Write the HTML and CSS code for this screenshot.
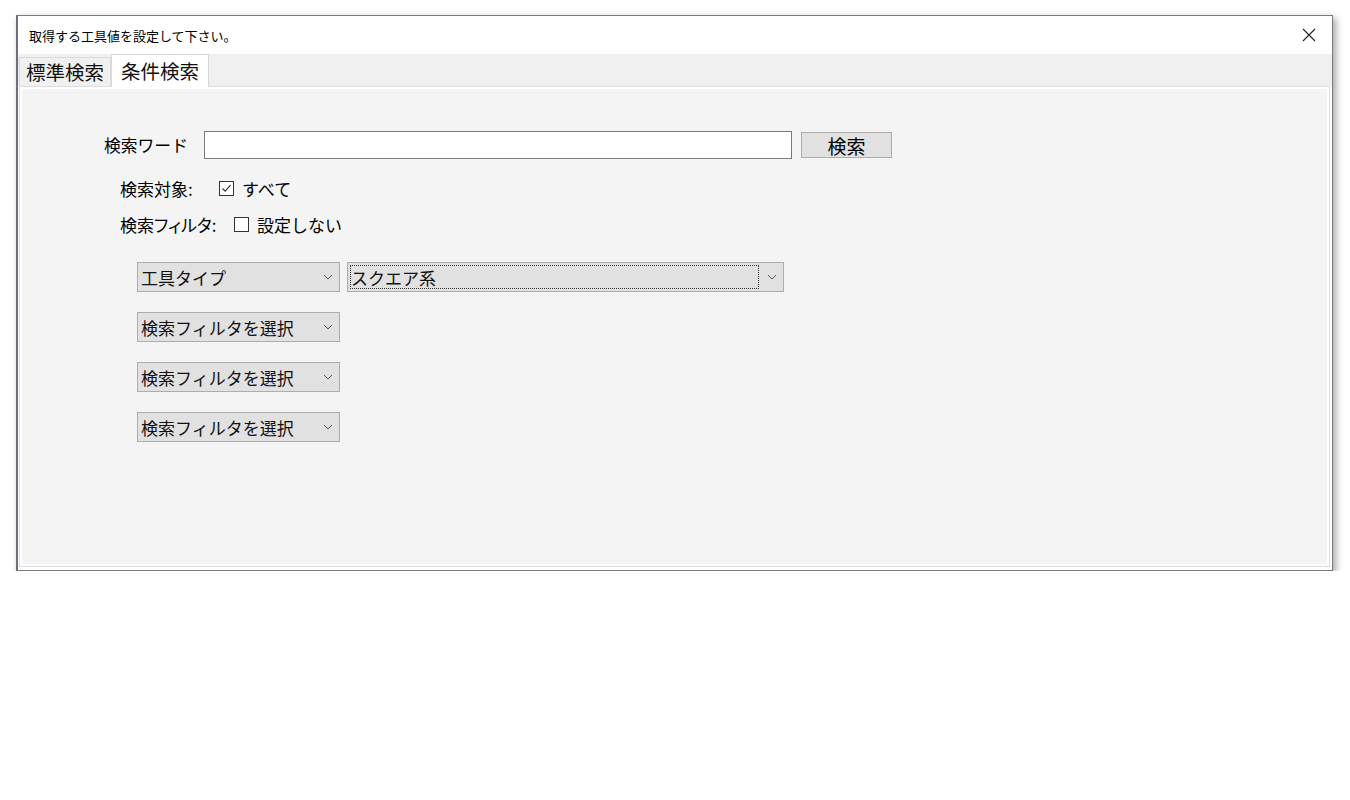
FILE: index.html
```html
<!DOCTYPE html>
<html lang="ja">
<head>
<meta charset="utf-8">
<title>取得する工具値を設定して下さい。</title>
<link rel="stylesheet" href="styles.css">
</head>
<body>
<div class="window">
  <div class="titlebar">
    <span class="title">取得する工具値を設定して下さい。</span>
    <span class="close">
      <svg width="14" height="14" viewBox="0 0 14 14"><path d="M1 1L13 13M13 1L1 13" stroke="#222" stroke-width="1.1" fill="none"/></svg>
    </span>
  </div>
  <div class="tabstrip">
    <div class="tab">標準検索</div>
    <div class="tab active">条件検索</div>
  </div>
  <div class="panel">
    <div class="row word-row">
      <span class="word-label">検索ワード</span>
      <input class="text-input" type="text" value="">
      <button class="btn">検索</button>
    </div>
    <div class="row opt-row first-opt">
      <span class="opt-label label-target">検索対象:</span>
      <span class="check">
        <svg width="15" height="15" viewBox="0 0 15 15"><rect x="0.5" y="0.5" width="14" height="14" fill="#fff" stroke="#333"/><path d="M3.5 7.5L6.2 10.2L11.5 4.2" stroke="#333" stroke-width="1.2" fill="none"/></svg>
      </span>
      <span class="opt-text">すべて</span>
    </div>
    <div class="row opt-row">
      <span class="opt-label label-filter">検索フィルタ:</span>
      <span class="check">
        <svg width="15" height="15" viewBox="0 0 15 15"><rect x="0.5" y="0.5" width="14" height="14" fill="#fff" stroke="#333"/></svg>
      </span>
      <span class="opt-text">設定しない</span>
    </div>
    <div class="row select-row first-select">
      <div class="select small"><span class="sel-text">工具タイプ</span><span class="chev"><svg width="10" height="6" viewBox="0 0 10 6"><path d="M1 1L5 5L9 1" stroke="#555" stroke-width="1" fill="none"/></svg></span></div>
      <div class="select wide"><span class="focus"><span class="sel-text">スクエア系</span></span><span class="chev"><svg width="10" height="6" viewBox="0 0 10 6"><path d="M1 1L5 5L9 1" stroke="#555" stroke-width="1" fill="none"/></svg></span></div>
    </div>
    <div class="row select-row">
      <div class="select small"><span class="sel-text">検索フィルタを選択</span><span class="chev"><svg width="10" height="6" viewBox="0 0 10 6"><path d="M1 1L5 5L9 1" stroke="#555" stroke-width="1" fill="none"/></svg></span></div>
    </div>
    <div class="row select-row">
      <div class="select small"><span class="sel-text">検索フィルタを選択</span><span class="chev"><svg width="10" height="6" viewBox="0 0 10 6"><path d="M1 1L5 5L9 1" stroke="#555" stroke-width="1" fill="none"/></svg></span></div>
    </div>
    <div class="row select-row">
      <div class="select small"><span class="sel-text">検索フィルタを選択</span><span class="chev"><svg width="10" height="6" viewBox="0 0 10 6"><path d="M1 1L5 5L9 1" stroke="#555" stroke-width="1" fill="none"/></svg></span></div>
    </div>
  </div>
</div>
</body>
</html>
```

FILE: styles.css
```css
* { box-sizing: border-box; }
html, body { margin: 0; padding: 0; background: #fff; }
body {
  font-family: "Noto Sans CJK JP", "Noto Sans", sans-serif;
  color: #000;
  padding: 15px 0 0 16px;
}
.window {
  width: 1317px;
  height: 556px;
  border: 1px solid #7a7a82;
  border-left: 2px solid #6e6e78;
  background: #fff;
  box-shadow: 3px 3px 7px rgba(0,0,0,0.35);
  display: flex;
  flex-direction: column;
  padding: 0 2px 3px 1px;
}
.titlebar {
  height: 38px;
  display: flex;
  align-items: center;
  justify-content: space-between;
  padding: 0 14px 0 10px;
}
.title { font-size: 13px; line-height: 1; }
.close { display: flex; }
.tabstrip {
  height: 32px;
  background: #f0f0f0;
  display: flex;
  align-items: flex-end;
  padding-left: 1px;
  margin: 0 -2px 0 -1px;
  position: relative;
  z-index: 1;
}
.tab {
  height: 29px;
  padding: 0 6px;
  font-size: 19.5px;
  line-height: 28px;
  border: 1px solid #d9d9d9;
  border-bottom: none;
  background: #f0f0f0;
  color: #111;
}
.tab.active {
  height: 33px;
  margin-bottom: -1px;
  background: #fff;
  padding: 0 9px;
  line-height: 31px;
}
.panel {
  flex: 1;
  background: #f4f4f4;
  border: 1px solid #dcdcdc;
  box-shadow: inset 0 0 0 2px #fff;
  padding-top: 44px;
}
.row { display: flex; align-items: center; }
.word-row { margin-left: 84px; height: 28px; }
.word-label { font-size: 16.8px; width: 100px; }
.text-input {
  width: 588px;
  height: 28px;
  border: 1px solid #7a7a7a;
  background: #fff;
  margin: 0;
  padding: 0 4px;
  font-family: inherit;
}
.btn {
  margin-left: 9px;
  width: 91px;
  height: 26px;
  background: #e1e1e1;
  border: 1px solid #adadad;
  font-family: inherit;
  font-size: 19px;
  line-height: 1;
  padding: 0;
  color: #000;
}
.opt-row { margin-left: 100px; height: 24px; margin-top: 12px; font-size: 17px; }
.first-opt { margin-top: 17px; }
.opt-label { flex: none; }
.label-target { width: 99px; }
.label-filter { width: 114px; font-feature-settings: "palt"; }
.check { display: flex; margin-right: 8px; }
.select-row { margin-left: 117px; margin-top: 20px; }
.first-select { margin-top: 26px; }
.select {
  height: 30px;
  background: #e1e1e1;
  border: 1px solid #adadad;
  display: flex;
  align-items: center;
  justify-content: space-between;
  font-size: 17px;
  color: #111;
}
.select.small { width: 203px; padding: 0 6px 0 3px; }
.select.wide { width: 437px; margin-left: 7px; padding: 0 6px 0 2px; }
.focus {
  flex: 1;
  height: 24px;
  border: 1px dotted #333;
  display: flex;
  align-items: center;
  margin-right: 8px;
}
.sel-text { line-height: 1; }
.chev { display: flex; }
```
